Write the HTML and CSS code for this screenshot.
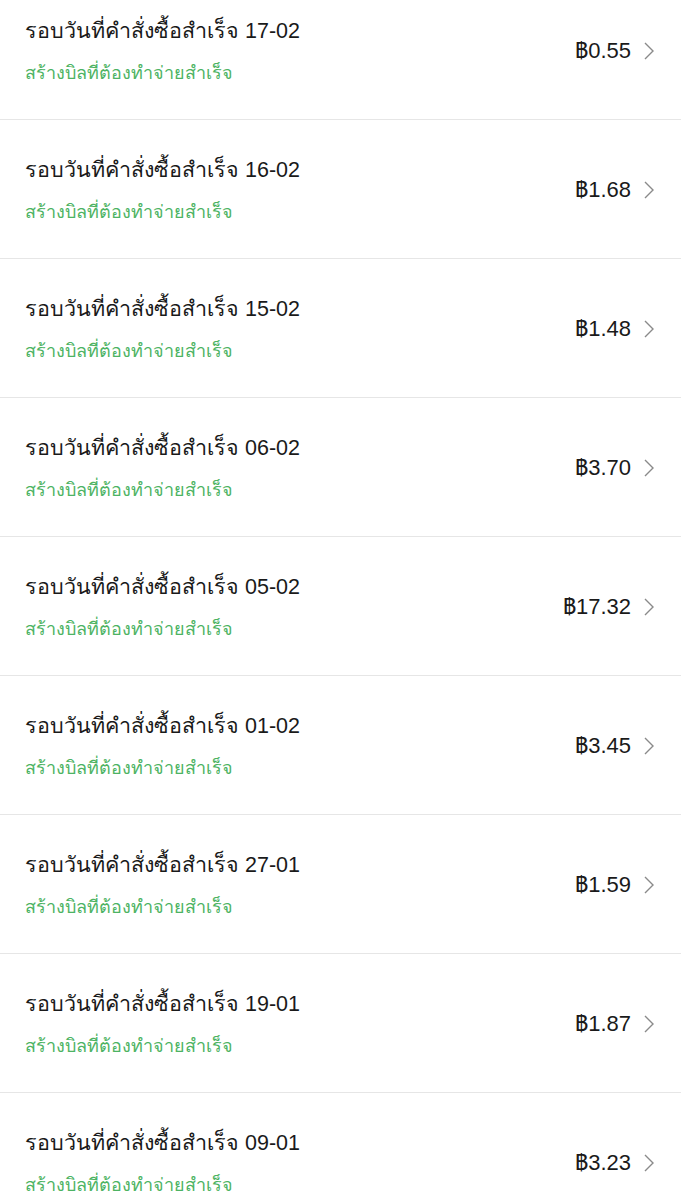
FILE: index.html
```html
<!DOCTYPE html>
<html lang="th">
<head>
    <meta charset="UTF-8">
    <meta name="viewport" content="width=device-width, initial-scale=1.0">
    <title>Bills</title>
    <link rel="stylesheet" href="styles.css">
</head>
<body>
    <div class="list">
        <div class="row">
            <div class="info">
                <div class="title">รอบวันที่คำสั่งซื้อสำเร็จ 17-02</div>
                <div class="status">สร้างบิลที่ต้องทำจ่ายสำเร็จ</div>
            </div>
            <div class="amount">฿0.55</div>
            <svg class="chevron" viewBox="0 0 10 18"><path d="M1 1l8 8-8 8"/></svg>
        </div>
        <div class="row">
            <div class="info">
                <div class="title">รอบวันที่คำสั่งซื้อสำเร็จ 16-02</div>
                <div class="status">สร้างบิลที่ต้องทำจ่ายสำเร็จ</div>
            </div>
            <div class="amount">฿1.68</div>
            <svg class="chevron" viewBox="0 0 10 18"><path d="M1 1l8 8-8 8"/></svg>
        </div>
        <div class="row">
            <div class="info">
                <div class="title">รอบวันที่คำสั่งซื้อสำเร็จ 15-02</div>
                <div class="status">สร้างบิลที่ต้องทำจ่ายสำเร็จ</div>
            </div>
            <div class="amount">฿1.48</div>
            <svg class="chevron" viewBox="0 0 10 18"><path d="M1 1l8 8-8 8"/></svg>
        </div>
        <div class="row">
            <div class="info">
                <div class="title">รอบวันที่คำสั่งซื้อสำเร็จ 06-02</div>
                <div class="status">สร้างบิลที่ต้องทำจ่ายสำเร็จ</div>
            </div>
            <div class="amount">฿3.70</div>
            <svg class="chevron" viewBox="0 0 10 18"><path d="M1 1l8 8-8 8"/></svg>
        </div>
        <div class="row">
            <div class="info">
                <div class="title">รอบวันที่คำสั่งซื้อสำเร็จ 05-02</div>
                <div class="status">สร้างบิลที่ต้องทำจ่ายสำเร็จ</div>
            </div>
            <div class="amount">฿17.32</div>
            <svg class="chevron" viewBox="0 0 10 18"><path d="M1 1l8 8-8 8"/></svg>
        </div>
        <div class="row">
            <div class="info">
                <div class="title">รอบวันที่คำสั่งซื้อสำเร็จ 01-02</div>
                <div class="status">สร้างบิลที่ต้องทำจ่ายสำเร็จ</div>
            </div>
            <div class="amount">฿3.45</div>
            <svg class="chevron" viewBox="0 0 10 18"><path d="M1 1l8 8-8 8"/></svg>
        </div>
        <div class="row">
            <div class="info">
                <div class="title">รอบวันที่คำสั่งซื้อสำเร็จ 27-01</div>
                <div class="status">สร้างบิลที่ต้องทำจ่ายสำเร็จ</div>
            </div>
            <div class="amount">฿1.59</div>
            <svg class="chevron" viewBox="0 0 10 18"><path d="M1 1l8 8-8 8"/></svg>
        </div>
        <div class="row">
            <div class="info">
                <div class="title">รอบวันที่คำสั่งซื้อสำเร็จ 19-01</div>
                <div class="status">สร้างบิลที่ต้องทำจ่ายสำเร็จ</div>
            </div>
            <div class="amount">฿1.87</div>
            <svg class="chevron" viewBox="0 0 10 18"><path d="M1 1l8 8-8 8"/></svg>
        </div>
        <div class="row">
            <div class="info">
                <div class="title">รอบวันที่คำสั่งซื้อสำเร็จ 09-01</div>
                <div class="status">สร้างบิลที่ต้องทำจ่ายสำเร็จ</div>
            </div>
            <div class="amount">฿3.23</div>
            <svg class="chevron" viewBox="0 0 10 18"><path d="M1 1l8 8-8 8"/></svg>
        </div>
    </div>
</body>
</html>
```

FILE: styles.css
```css
body {
    margin: 0;
    background: #fff;
    font-family: "Liberation Sans", "Noto Sans", sans-serif;
    color: #1a1a1a;
}
.list {
    margin-top: -19px;
}
.row {
    display: flex;
    align-items: center;
    height: 138px;
    padding: 0 27px 0 25px;
    border-bottom: 1px solid #e6e6e6;
}
.info {
    flex: 1;
    padding-top: 4px;
}
.title {
    font-size: 21.5px;
    line-height: 28px;
}
.status {
    margin-top: 14px;
    font-size: 18px;
    line-height: 28px;
    color: #4db363;
}
.amount {
    font-size: 22px;
    font-weight: 500;
}
.chevron {
    width: 10px;
    height: 18px;
    margin-left: 13px;
    margin-top: 2px;
    fill: none;
    stroke: #8a8a8a;
    stroke-width: 1.4;
}
```
